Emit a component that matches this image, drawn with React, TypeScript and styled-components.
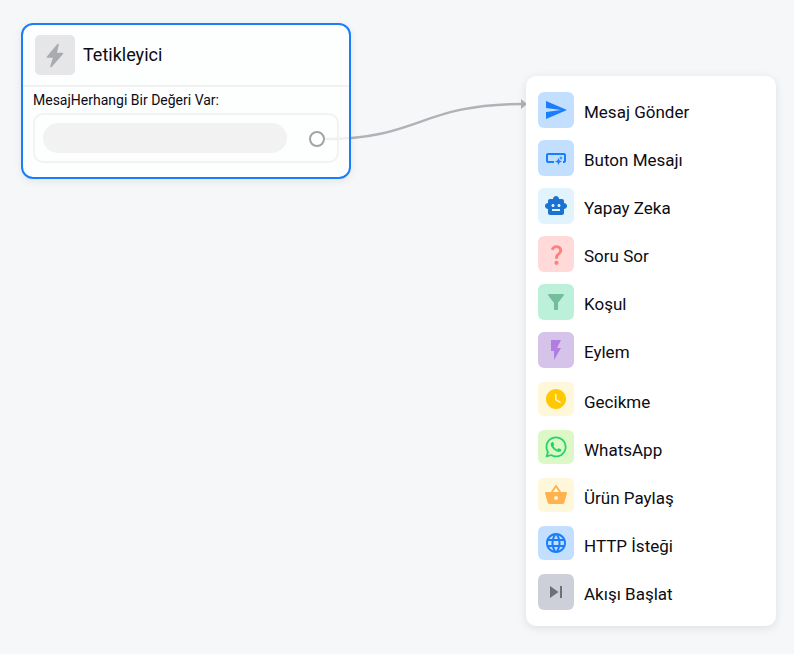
import React from "react";
import styled, { createGlobalStyle } from "styled-components";
import { IconType } from "react-icons";
import {
  MdSend, MdSmartButton, MdSmartToy, MdQuestionMark, MdFilterAlt, MdFlashOn,
  MdWatchLater, MdShoppingBasket, MdLanguage, MdSkipNext,
} from "react-icons/md";
import { FaWhatsapp } from "react-icons/fa";

const Global = createGlobalStyle`
  html, body { margin: 0; padding: 0; background: #f6f7f9; }
  body { font-family: Roboto, "Liberation Sans", sans-serif; }
`;

const Canvas = styled.div`
  position: relative;
  width: 794px;
  height: 654px;
  overflow: hidden;
  background: #f6f7f9;
`;

const Edge = styled.svg`
  position: absolute;
  left: 0;
  top: 0;
`;

const TriggerNode = styled.div`
  position: absolute;
  left: 21px;
  top: 23px;
  width: 330px;
  height: 156px;
  box-sizing: border-box;
  border: 2px solid #1a7efb;
  border-radius: 12px;
  background-color: rgba(255, 255, 255, 0.8);
  background-image: radial-gradient(rgba(225, 228, 232, 0.4) 0.6px, transparent 0.7px);
  background-size: 4px 4px;
  box-shadow: 0 2px 8px rgba(0, 0, 0, 0.08);
`;

const NodeHeader = styled.div`
  display: flex;
  align-items: center;
  gap: 8px;
  height: 62px;
  box-sizing: border-box;
  padding: 10px 12px;
  border-bottom: 2px solid #f1f1f1;
`;

const HeaderIcon = styled.div`
  width: 40px;
  height: 40px;
  flex: none;
  border-radius: 5px;
  background: #e6e6e8;
  color: #a9abae;
  display: flex;
  align-items: center;
  justify-content: center;
`;

const NodeTitle = styled.div`
  font-size: 18px;
  line-height: 24px;
  color: #0c0c14;
`;

const NodeBody = styled.div`
  padding: 5px 10px 0;
`;

const ConditionLabel = styled.div`
  font-size: 14px;
  line-height: 16px;
  color: #0c0c14;
  margin-bottom: 5px;
`;

const ConditionBox = styled.div`
  display: flex;
  align-items: center;
  box-sizing: border-box;
  height: 50px;
  padding: 0 12px 0 8px;
  border: 2px solid #f2f2f3;
  border-radius: 10px;
`;

const Pill = styled.div`
  width: 244px;
  height: 30px;
  border-radius: 15px;
  background: #f2f2f3;
`;

const Handle = styled.div`
  width: 16px;
  height: 16px;
  box-sizing: border-box;
  margin: 2px 0 0 22px;
  border: 2px solid #a3a3a6;
  border-radius: 50%;
  background: #fff;
`;

const Menu = styled.div`
  position: absolute;
  left: 526px;
  top: 76px;
  width: 250px;
  height: 550px;
  box-sizing: border-box;
  padding: 16px 12px;
  border-radius: 10px;
  background: #fff;
  box-shadow: 0 2px 10px rgba(0, 0, 0, 0.1);
  display: flex;
  flex-direction: column;
  gap: 12px;
`;

const Row = styled.div<{ $drop: number }>`
  display: flex;
  align-items: center;
  gap: 10px;
  height: 36px;
  margin-top: ${(p) => p.$drop}px;
`;

const Tile = styled.div<{ $bg: string; $fg: string; $h: number; $top: number }>`
  width: 36px;
  height: ${(p) => p.$h}px;
  flex: none;
  margin-top: ${(p) => p.$top}px;
  border-radius: 6px;
  background: ${(p) => p.$bg};
  color: ${(p) => p.$fg};
  display: flex;
  align-items: center;
  justify-content: center;
`;

const RowLabel = styled.div`
  font-size: 17px;
  line-height: 20px;
  padding-top: 3px;
  color: #0c0c14;
`;

type Item = {
  label: string; Icon: IconType; bg: string; fg: string; size: number;
  h?: number; drop?: number;
};

const items: Item[] = [
  { label: "Mesaj Gönder", Icon: MdSend, bg: "#c2dfff", fg: "#1a7efb", size: 24 },
  { label: "Buton Mesajı", Icon: MdSmartButton, bg: "#c2dfff", fg: "#1a7efb", size: 24 },
  { label: "Yapay Zeka", Icon: MdSmartToy, bg: "#e1f3fd", fg: "#1a73d2", size: 24 },
  { label: "Soru Sor", Icon: MdQuestionMark, bg: "#ffdad9", fg: "#ff8080", size: 25 },
  { label: "Koşul", Icon: MdFilterAlt, bg: "#bcf0da", fg: "#73bd9c", size: 24 },
  { label: "Eylem", Icon: MdFlashOn, bg: "#d6c3e9", fg: "#b27de0", size: 24 },
  { label: "Gecikme", Icon: MdWatchLater, bg: "#fff7d9", fg: "#ffc800", size: 24, h: 34, drop: 2 },
  { label: "WhatsApp", Icon: FaWhatsapp, bg: "#dcf8c6", fg: "#25d366", size: 24, h: 34 },
  { label: "Ürün Paylaş", Icon: MdShoppingBasket, bg: "#fff7d9", fg: "#ffb24d", size: 24, h: 34 },
  { label: "HTTP İsteği", Icon: MdLanguage, bg: "#c2dfff", fg: "#1a7efb", size: 24, h: 34 },
  { label: "Akışı Başlat", Icon: MdSkipNext, bg: "#cdd0d9", fg: "#6e7079", size: 24 },
];

export default function App() {
  return (
    <Canvas>
      <Global />
      <Edge width="794" height="654" aria-hidden="true">
        <path d="M325 139 C 420 139, 420 104, 523 104" fill="none" stroke="#b1b1b7" strokeWidth="2.4" />
        <path d="M521 99 L527 104 L521 109 Z" fill="#b1b1b7" />
      </Edge>
      <TriggerNode>
        <NodeHeader>
          <HeaderIcon>
            <svg width="40" height="40" viewBox="0 0 40 40" aria-hidden="true">
              <path
                d="M23 9.5 L12.5 22 H19 L16 31.5 L27.5 18.5 H21 Z"
                fill="currentColor"
                stroke="currentColor"
                strokeWidth="1.6"
                strokeLinejoin="round"
              />
            </svg>
          </HeaderIcon>
          <NodeTitle>Tetikleyici</NodeTitle>
        </NodeHeader>
        <NodeBody>
          <ConditionLabel>MesajHerhangi Bir Değeri Var:</ConditionLabel>
          <ConditionBox>
            <Pill />
            <Handle />
          </ConditionBox>
        </NodeBody>
      </TriggerNode>
      <Menu>
        {items.map(({ label, Icon, bg, fg, size, h = 36, drop = 0 }) => (
          <Row key={label} $drop={drop}>
            <Tile $bg={bg} $fg={fg} $h={h} $top={h === 34 ? -2 : 0}><Icon size={size} /></Tile>
            <RowLabel>{label}</RowLabel>
          </Row>
        ))}
      </Menu>
    </Canvas>
  );
}
